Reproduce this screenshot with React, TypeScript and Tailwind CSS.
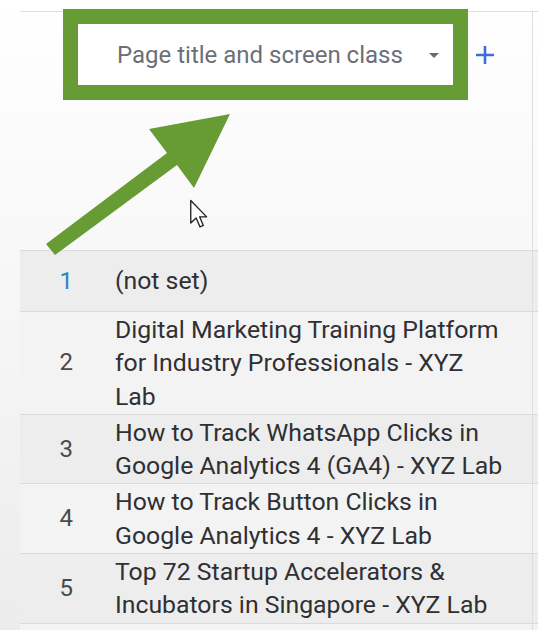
import React from "react";

const rows = [
  { n: "1", t: "(not set)", first: true },
  { n: "2", t: "Digital Marketing Training Platform for Industry Professionals - XYZ Lab" },
  { n: "3", t: "How to Track WhatsApp Clicks in Google Analytics 4 (GA4) - XYZ Lab" },
  { n: "4", t: "How to Track Button Clicks in Google Analytics 4 - XYZ Lab" },
  { n: "5", t: "Top 72 Startup Accelerators & Incubators in Singapore - XYZ Lab" },
  { n: "6", t: "Google Ads Benchmarks by Industry - XYZ Lab" },
];

export default function App() {
  return (
    <div
      className="relative w-[538px] h-[630px] overflow-hidden bg-gradient-to-b from-white via-[#f6f6f6] to-[#ececec] pl-[20px] pt-[11px]"
      style={{ fontFamily: "Roboto, 'Liberation Sans', sans-serif" }}
    >
      <div className="border-t border-[#dedede]">
        {/* header */}
        <div className="flex h-[238px]">
          <div className="flex-1 flex items-start">
            <div className="ml-[43px] -mt-[3px] w-[405px] h-[91px] border-[15px] border-[#679c34] bg-white flex items-center pl-[39px] pr-[14px]">
              <span className="text-[24px] text-[#6a6f78] whitespace-nowrap">
                Page title and screen class
              </span>
              <span className="ml-auto mt-[2px] w-0 h-0 border-l-[5px] border-r-[5px] border-t-[5px] border-l-transparent border-r-transparent border-t-[#6b6b6b]" />
            </div>
            <div className="ml-[7px] mt-[33px] w-[20px] h-[20px] flex items-center justify-center">
              <svg width="20" height="20" viewBox="0 0 20 20">
                <path d="M10 1v18M1 10h18" stroke="#3a6fd8" strokeWidth="2.6" />
              </svg>
            </div>
          </div>
          <div className="w-[6px] border-l border-[#dedede]" />
        </div>
        {/* rows */}
        {rows.map((r, i) => (
          <div
            key={r.n}
            className={
              "flex border-t border-[#dadada] " +
              (i % 2 === 0 ? "bg-[#ededed]" : "bg-[#f3f3f3]")
            }
          >
            <div className="flex-1 flex items-center min-h-[60px] py-[1px]">
              <div
                className={
                  "w-[53px] text-right text-[24px] leading-[33px] " +
                  (r.first ? "text-[#2a86b8]" : "text-[#4a4a4a]")
                }
              >
                {r.n}
              </div>
              <div className="ml-[42px] w-[390px] text-[24.8px] leading-[33.3px] text-[#2f3033]">
                {r.t}
              </div>
            </div>
            <div className="w-[6px] border-l border-[#dedede]" />
          </div>
        ))}
      </div>

      {/* annotation arrow */}
      <svg className="absolute left-0 top-0" width="538" height="630" viewBox="0 0 538 630">
        <polygon
          points="46,244 167,153 149,129 230,114 194,188 177,165 55,255"
          fill="#679c34"
        />
      </svg>

      {/* mouse cursor */}
      <svg className="absolute left-[189px] top-[199px]" width="20" height="30" viewBox="0 0 13 20">
        <path
          d="M1 1 L1 16 L4.6 12.6 L7.2 18.6 L9.4 17.6 L6.9 11.9 L11.6 11.9 Z"
          fill="white"
          stroke="#222"
          strokeWidth="0.9"
          strokeLinejoin="round"
        />
      </svg>
    </div>
  );
}
